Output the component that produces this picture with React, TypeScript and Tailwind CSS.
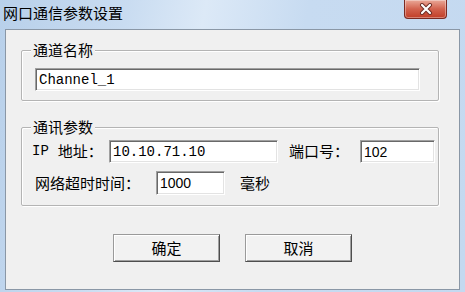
import React from "react";

const cjk = { fontFamily: '"Noto Sans CJK SC", "Noto Sans", sans-serif' };
const mono = { fontFamily: '"Liberation Mono", "Noto Sans CJK SC", monospace' };
const sans = { fontFamily: '"Liberation Sans", "Noto Sans CJK SC", sans-serif' };

function Input({ value, className, font }: { value: string; className: string; font: React.CSSProperties }) {
  return (
    <div
      className={`bg-white border border-t-[#a0a0a0] border-l-[#a0a0a0] border-b-[#ffffff] border-r-[#ffffff] shadow-[inset_1px_1px_0_#696969,inset_-1px_-1px_0_#e3e3e3] flex items-center pl-[3px] text-[14px] leading-none text-black ${className}`}
      style={font}
    >
      {value}
    </div>
  );
}

function Button({ label }: { label: string }) {
  return (
    <div
      className="w-[107px] h-[28px] flex items-center justify-center bg-[#f2f2f2] border border-t-[#9a9a9a] border-l-[#9a9a9a] border-b-[#4e4e4e] border-r-[#4e4e4e] shadow-[inset_1px_1px_0_#ffffff,inset_-1px_-1px_0_#a0a0a0] text-[15px] text-black"
      style={cjk}
    >
      {label}
    </div>
  );
}

export default function App() {
  return (
    <div
      className="w-[465px] h-[292px] flex flex-col overflow-hidden"
      style={{ background: "linear-gradient(100deg, #b8d0ea 0%, #c9dcf1 25%, #dce9f7 40%, #c7dbf1 60%, #c4d9f0 100%)" }}
    >
      {/* title bar */}
      <div className="h-[29px] flex items-start shrink-0">
        <div className="pl-[3px] pt-[4px] text-[15px] leading-[18px] text-black" style={cjk}>
          网口通信参数设置
        </div>
        <div className="ml-auto mr-[18px] w-[43px] h-[19px] rounded-b-[4px] border border-t-0 border-[#7a2a22] bg-gradient-to-b from-[#e9a898] via-[#d2624e] to-[#c13d26] flex items-center justify-center shadow-[inset_0_0_0_1px_rgba(255,255,255,0.35)]">
          <svg width="14" height="12" viewBox="0 0 14 12">
            <path d="M3 2 L11 10 M11 2 L3 10" stroke="#6b2a22" strokeWidth="4" strokeLinecap="round" />
            <path d="M3 2 L11 10 M11 2 L3 10" stroke="#ffffff" strokeWidth="2.2" strokeLinecap="round" />
          </svg>
        </div>
      </div>

      {/* client area */}
      <div className="mx-[5px] mb-[2px] flex-1 bg-[#f0f0f0] border border-[#8a97a6] flex flex-col">
        {/* group 1 */}
        <div className="relative ml-[15px] mt-[20px] w-[418px] h-[51px] border border-[#b4b4b4] rounded-[2px] shadow-[1px_1px_0_#ffffff,inset_1px_1px_0_#ffffff]">
          <span className="absolute left-[9px] top-[-11px] px-[2px] bg-[#f0f0f0] text-[15px] leading-[20px] text-black" style={cjk}>
            通道名称
          </span>
          <Input value="Channel_1" className="ml-[13px] mt-[17px] w-[385px] h-[23px]" font={mono} />
        </div>

        {/* group 2 */}
        <div className="relative ml-[15px] mt-[26px] w-[418px] h-[79px] border border-[#b4b4b4] rounded-[2px] shadow-[1px_1px_0_#ffffff,inset_1px_1px_0_#ffffff] flex flex-col">
          <span className="absolute left-[9px] top-[-11px] px-[2px] bg-[#f0f0f0] text-[15px] leading-[20px] text-black" style={cjk}>
            通讯参数
          </span>
          <div className="flex items-center mt-[12px] h-[23px]">
            <span className="ml-[10px] w-[77px] flex items-center text-[15px] text-black whitespace-nowrap" style={cjk}>
              <span className="text-[14px] mr-[9px]" style={mono}>IP</span>地址：
            </span>
            <Input value="10.10.71.10" className="w-[169px] h-[23px]" font={mono} />
            <span className="ml-[11px] w-[71px] text-[15px] text-black whitespace-nowrap" style={cjk}>
              端口号：
            </span>
            <Input value="102" className="w-[75px] h-[23px]" font={sans} />
          </div>
          <div className="flex items-center mt-[8px] h-[24px]">
            <span className="ml-[13px] w-[121px] text-[15px] text-black whitespace-nowrap" style={cjk}>
              网络超时时间：
            </span>
            <Input value="1000" className="w-[69px] h-[24px]" font={sans} />
            <span className="ml-[15px] text-[15px] text-black" style={cjk}>
              毫秒
            </span>
          </div>
        </div>

        {/* buttons */}
        <div className="flex mt-[28px] ml-[107px] gap-[25px]">
          <Button label="确定" />
          <Button label="取消" />
        </div>
      </div>
    </div>
  );
}
